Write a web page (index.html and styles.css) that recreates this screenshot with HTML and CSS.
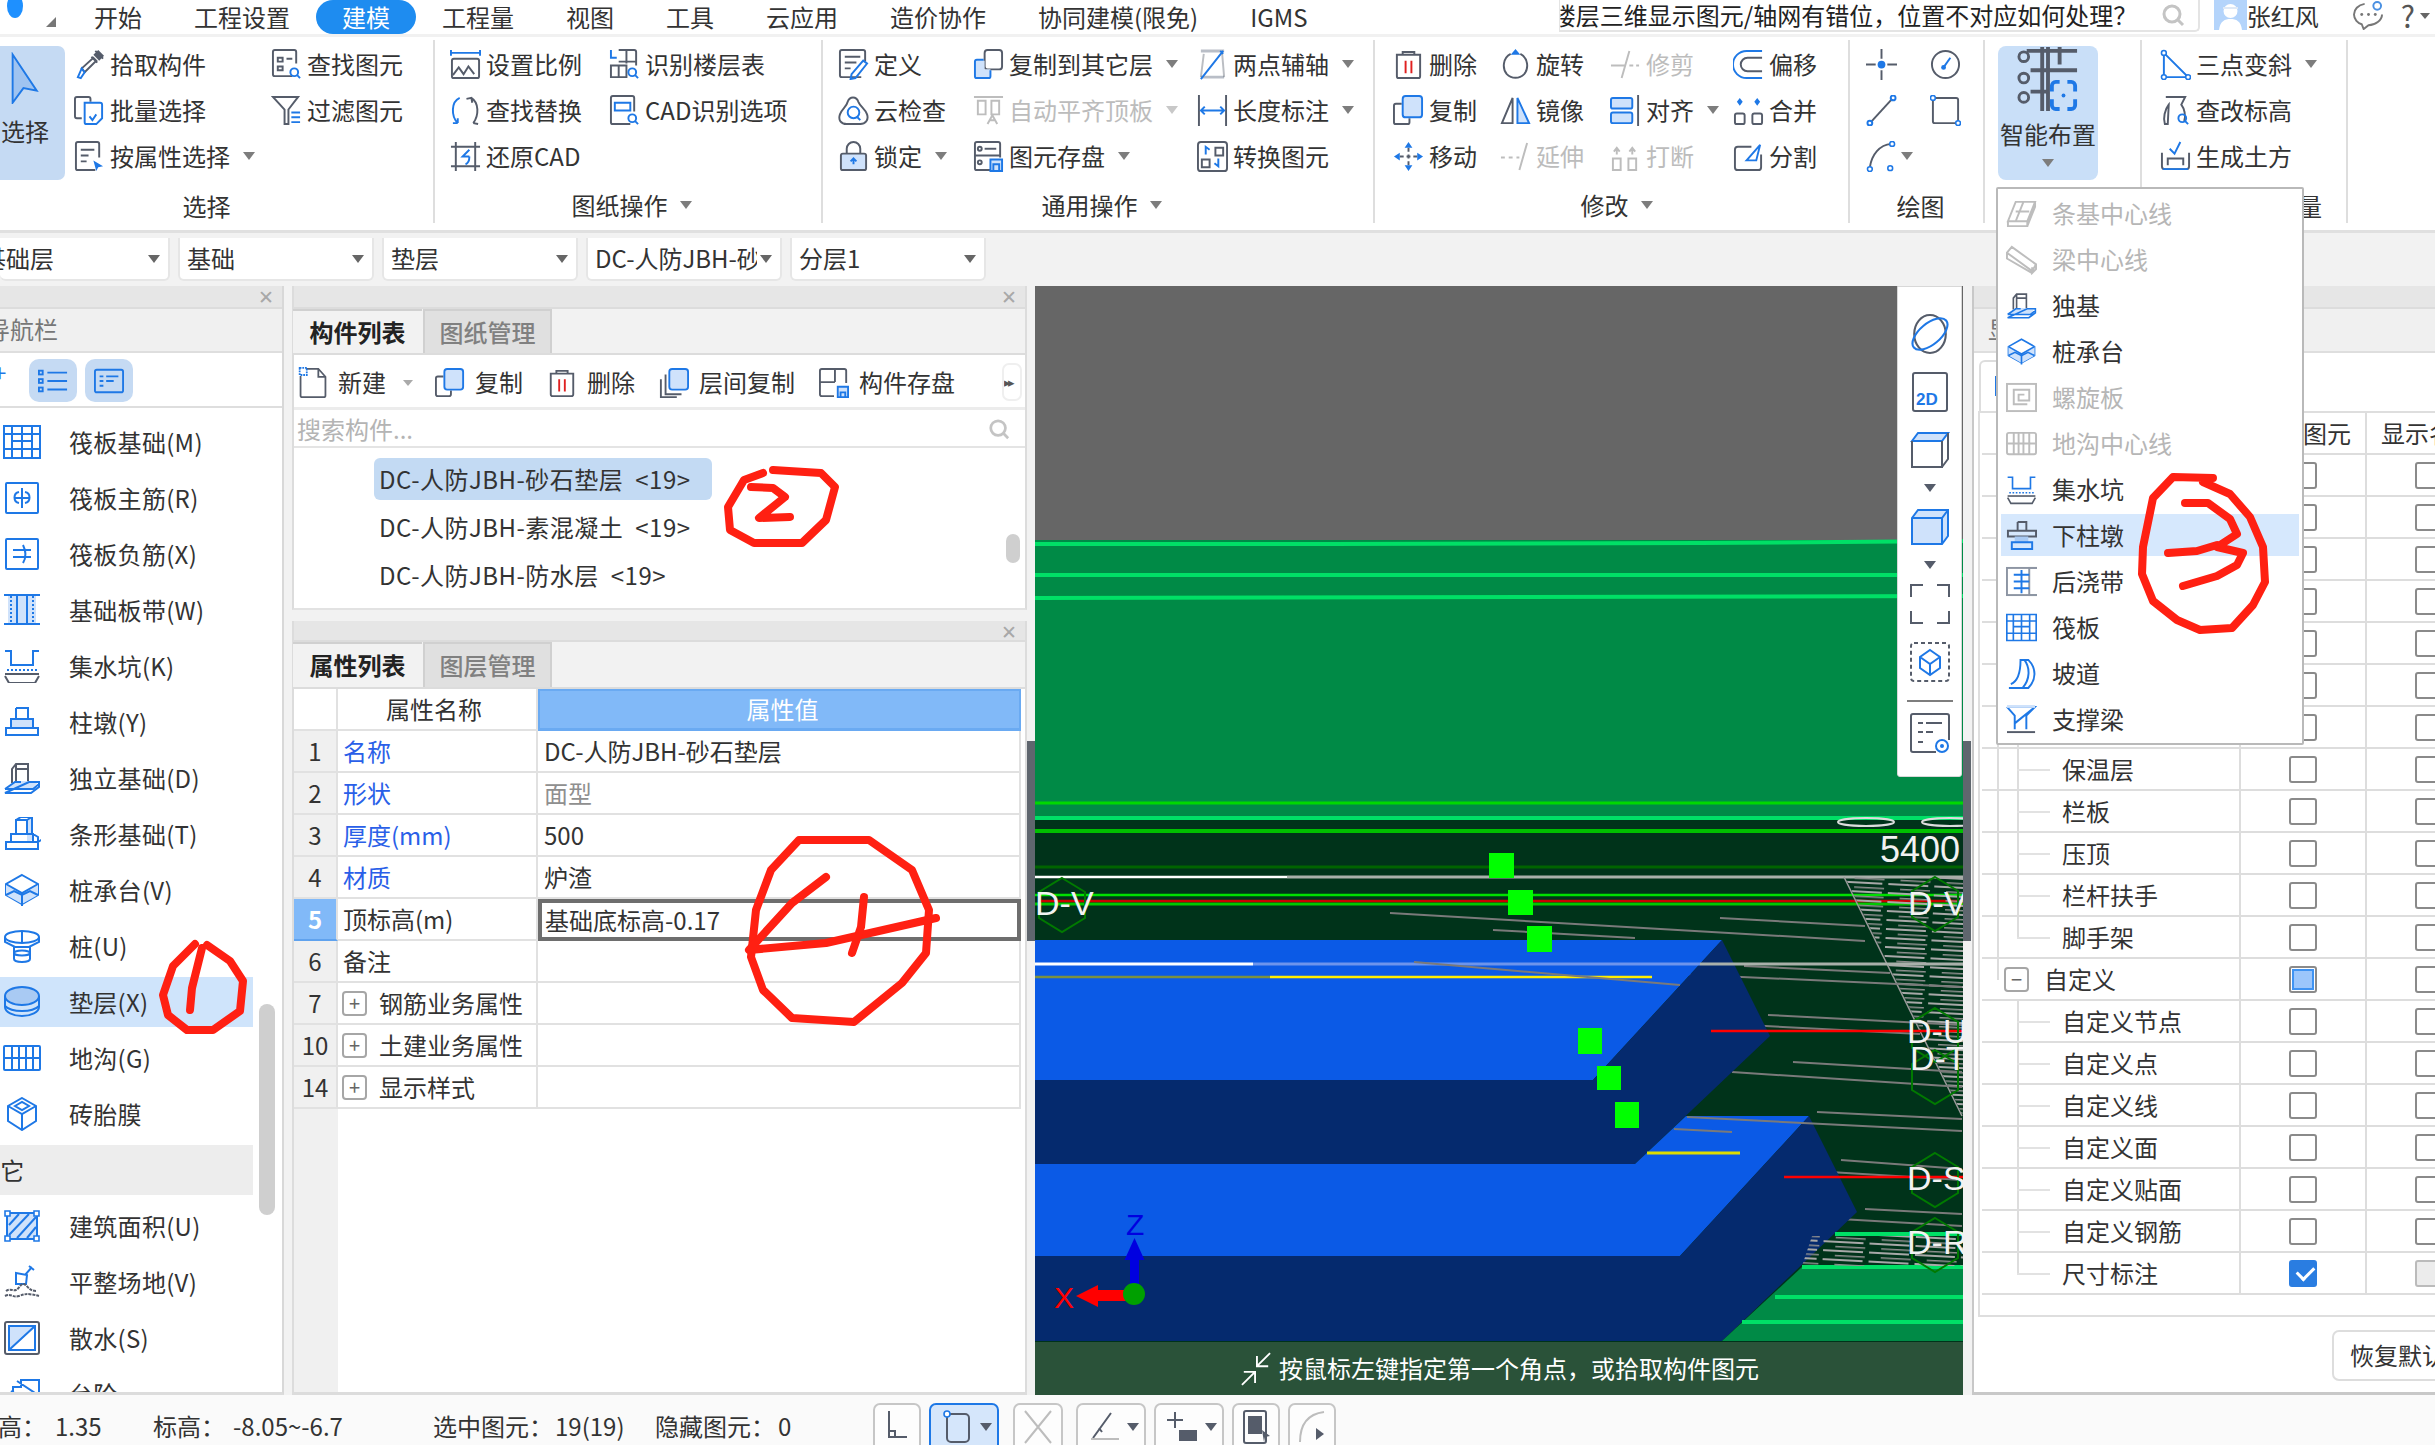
FILE: index.html
```html
<!DOCTYPE html>
<html lang="zh-CN">
<head>
<meta charset="utf-8">
<title>建模</title>
<link rel="stylesheet" href="styles.css">
</head>
<body>
<svg class="sprite" xmlns="http://www.w3.org/2000/svg">
<symbol id="pick" viewBox="0 0 32 32"><path class="d" d="M22 2l8 8M18 8l6 6M8 20L20 9l3 3L11 24z"/><path class="b" d="M8 20l-4 9 3 1 4-6z"/><path class="dk" d="M20 6l5-5 6 6-5 5z"/></symbol>
<symbol id="find" viewBox="0 0 32 32"><path class="d" d="M22 28H4a2 2 0 0 1-2-2V3a2 2 0 0 1 2-2h20a2 2 0 0 1 2 2v12"/><path class="d" d="M7 9h5v4H7zM16 10h6M7 18h5v4H7z"/><circle class="b" cx="24" cy="24" r="4"/><path class="b" d="M27 27l3 3"/></symbol>
<symbol id="batch" viewBox="0 0 32 32"><path class="d" d="M8 24H3a2 2 0 0 1-2-2V4a2 2 0 0 1 2-2h12a2 2 0 0 1 2 2v3"/><path class="b" d="M11 8h16a2 2 0 0 1 2 2v14l-6 6H13a2 2 0 0 1-2-2z"/><path class="b" d="M16 22l3 4 4-6"/></symbol>
<symbol id="filter" viewBox="0 0 32 32"><path class="d" d="M2 2h26L18 15v15h-4V15z"/><path class="b" d="M21 18h9M21 23h9M21 28h9"/></symbol>
<symbol id="attr" viewBox="0 0 32 32"><path class="d" d="M22 30H4a2 2 0 0 1-2-2V3a2 2 0 0 1 2-2h20a2 2 0 0 1 2 2v14"/><path class="d" d="M7 9h14M7 15h8M7 21h6"/><path class="bf" d="M20 20l10 6-5 1-2 4z"/></symbol>
<symbol id="scale" viewBox="0 0 32 32"><path class="b" d="M1 1v6M31 1v6M1 4h30"/><path class="d" d="M4 10h24a2 2 0 0 1 2 2v16a2 2 0 0 1-2 2H4a2 2 0 0 1-2-2V12a2 2 0 0 1 2-2z"/><path class="d" d="M3 27l6-8 5 7 5-8 6 8"/></symbol>
<symbol id="floors" viewBox="0 0 32 32"><path class="d" d="M10 1h16a2 2 0 0 1 2 2v14M18 1v14M10 13h18M2 17h16v12H2zM10 17v12"/><path class="b" d="M2 1v8h6"/><circle class="b" cx="24" cy="24" r="4"/><path class="b" d="M27 27l3 3"/></symbol>
<symbol id="replace" viewBox="0 0 32 32"><path class="b" d="M10 3C1 7 1 22 8 29M8 29l-5 0M8 29v-5"/><path class="d" d="M22 3c8 5 8 18 2 26M17 4l5-1 1 5M24 29l5 1"/></symbol>
<symbol id="cadopt" viewBox="0 0 32 32"><path class="d" d="M22 30H4a2 2 0 0 1-2-2V3a2 2 0 0 1 2-2h20a2 2 0 0 1 2 2v14"/><path class="b" d="M6 8h16v8H6z" stroke-width="1"/><circle class="b" cx="24" cy="24" r="4"/><path class="b" d="M27 27l3 3"/></symbol>
<symbol id="restore" viewBox="0 0 32 32"><path class="d" d="M6 1v30M26 1v30M1 6h30M1 26h30"/><path class="b" d="M20 9l-7 7h7M20 16c0 5-1 7-4 8"/></symbol>
<symbol id="def" viewBox="0 0 32 32"><path class="d" d="M24 29H4a2 2 0 0 1-2-2V3a2 2 0 0 1 2-2h22a2 2 0 0 1 2 2v10"/><path class="d" d="M7 8h16M7 14h12M7 20h6"/><path class="b" d="M26 12l4 3-12 15-5 1 1-5z"/></symbol>
<symbol id="cloud" viewBox="0 0 32 32"><path class="d" d="M9 30C3 30 0 26 2 20 4 14 9 12 10 7c2-6 9-6 11 0 2 5 7 7 9 13 2 6-2 10-7 10z"/><circle class="b" cx="16" cy="18" r="6"/><path class="b" d="M20 23l3 3"/></symbol>
<symbol id="lock" viewBox="0 0 32 32"><path class="d" d="M9 13V8a7 7 0 0 1 14 0v5"/><rect class="lf" x="3" y="13" width="26" height="17" rx="2"/><rect class="d" x="3" y="13" width="26" height="17" rx="2"/><path class="b" d="M16 18v6M13 21l3-3 3 3"/></symbol>
<symbol id="copyto" viewBox="0 0 32 32"><rect class="d" x="12" y="1" width="18" height="20" rx="3"/><path class="lf" d="M2 12h10v9h6v9H2z"/><path class="b" d="M11 11H4a2 2 0 0 0-2 2v15a2 2 0 0 0 2 2h12a2 2 0 0 0 2-2v-6"/></symbol>
<symbol id="auto" viewBox="0 0 32 32"><path class="g" d="M1 2h30M5 6h8v14H5zM19 6h8v14h-8zM15 30l5-9 5 9M17 26h6"/></symbol>
<symbol id="save" viewBox="0 0 32 32"><path class="d" d="M22 30H4a2 2 0 0 1-2-2V3a2 2 0 0 1 2-2h22a2 2 0 0 1 2 2v14M2 15h26"/><circle class="d" cx="7" cy="8" r="2"/><circle class="d" cx="7" cy="22" r="2"/><path class="d" d="M12 8h12"/><rect class="lf" x="18" y="19" width="12" height="12"/><path class="b" d="M18 19h12v12H18zM21 31v-7h6v7"/></symbol>
<symbol id="twopt" viewBox="0 0 32 32"><path class="dk2" d="M4 2h24M4 29h24"/><path class="b" d="M4 31L27 2M24 2l3 3"/><path class="d" d="M7 5l-3 24M26 5l2 24" opacity=".4"/></symbol>
<symbol id="len" viewBox="0 0 32 32"><path class="d" d="M2 0v32M30 0v32"/><path class="b" d="M4 16h24M8 12l-4 4 4 4M24 12l4 4-4 4"/></symbol>
<symbol id="conv" viewBox="0 0 32 32"><rect class="d" x="1" y="1" width="30" height="30" rx="3"/><path class="d" d="M19 7h8v8h-8zM5 19h8v8H5z"/><path class="b" d="M9 14V6l4 3M22 18v8l-4-3"/></symbol>
<symbol id="del" viewBox="0 0 32 32"><path class="d" d="M10 6V3h12v3M4 6h24v22a2 2 0 0 1-2 2H6a2 2 0 0 1-2-2z"/><path class="r" d="M13 12v13M19 12v13"/></symbol>
<symbol id="copy" viewBox="0 0 32 32"><path class="d" d="M9 9H3a2 2 0 0 0-2 2v17a2 2 0 0 0 2 2h12a2 2 0 0 0 2-2v-4"/><rect class="lf" x="10" y="1" width="20" height="22" rx="3"/><rect class="b" x="10" y="1" width="20" height="22" rx="3"/></symbol>
<symbol id="move" viewBox="0 0 32 32"><path class="d" d="M16 7v18M7 16h18" stroke-dasharray="4 3"/><path class="bf" d="M16 1l4 6h-8zM16 31l4-6h-8zM1 16l6-4v8zM31 16l-6-4v8z"/></symbol>
<symbol id="rot" viewBox="0 0 32 32"><path class="d" d="M11 5C3 9 2 20 7 26c5 5 13 5 18 0 5-6 4-17-4-21"/><path class="bf" d="M16 0l5 6h-10z"/></symbol>
<symbol id="mirror" viewBox="0 0 32 32"><path class="d" d="M13 3L2 29h11z"/><path class="lf" d="M18 3l12 26H18z"/><path class="b" d="M18 29V3l12 26z"/></symbol>
<symbol id="ext" viewBox="0 0 32 32"><path class="g" d="M1 17h4M9 17h4M17 17h3M28 2L20 30"/></symbol>
<symbol id="trim" viewBox="0 0 32 32"><path class="g" d="M20 2l-8 28M1 17h14M20 17h4M27 17h3"/></symbol>
<symbol id="brk" viewBox="0 0 32 32"><path class="g" d="M3 18h8v12H3zM19 18h8v12h-8zM7 14V8M23 14V8M4 11l3-4 3 4M20 11l3-4 3 4"/></symbol>
<symbol id="align" viewBox="0 0 32 32"><rect class="lf" x="1" y="3" width="22" height="11"/><rect class="b" x="1" y="3" width="22" height="11" rx="2"/><rect class="lf" x="1" y="18" width="22" height="11"/><rect class="b" x="1" y="18" width="22" height="11" rx="2"/><path class="d" d="M29 0v32"/></symbol>
<symbol id="offset" viewBox="0 0 32 32"><path class="b" d="M30 2H14A12 12 0 0 0 14 30h16"/><path class="d" d="M30 9H15a7 7 0 0 0 0 14h15"/></symbol>
<symbol id="merge" viewBox="0 0 32 32"><rect class="d" x="2" y="19" width="10" height="11" rx="2"/><rect class="d" x="20" y="19" width="10" height="11" rx="2"/><path class="bf" d="M7 3l3 4-3 4-3-4zM25 3l3 4-3 4-3-4z"/></symbol>
<symbol id="split" viewBox="0 0 32 32"><path class="d" d="M19 6H5a3 3 0 0 0-3 3v18a3 3 0 0 0 3 3h21a3 3 0 0 0 3-3V14"/><path class="b" d="M14 20l14-16-4 16z" stroke-width="1.6"/></symbol>
<symbol id="pt" viewBox="0 0 32 32"><path class="d" d="M16 0v10M16 22v10M0 16h10M22 16h10"/><circle class="bf" cx="16" cy="16" r="4"/></symbol>
<symbol id="gauge" viewBox="0 0 32 32"><circle class="d" cx="16" cy="16" r="14"/><path class="b" d="M14 19l7-10"/><circle class="bf" cx="14" cy="19" r="2.5"/></symbol>
<symbol id="lin" viewBox="0 0 32 32"><path class="d" d="M5 28L27 4"/><circle class="b" cx="4" cy="29" r="2.5"/><circle class="b" cx="28" cy="3" r="2.5"/></symbol>
<symbol id="rc" viewBox="0 0 32 32"><rect class="d" x="3" y="3" width="26" height="26" rx="2"/><circle class="bw" cx="3" cy="3" r="2.5"/><circle class="bw" cx="29" cy="29" r="2.5"/></symbol>
<symbol id="arc" viewBox="0 0 32 32"><path class="d" d="M4 27C6 14 14 4 26 3"/><circle class="bw" cx="4" cy="29" r="2.5"/><circle class="bw" cx="27" cy="3" r="2.5"/><circle class="bw" cx="25" cy="28" r="2.5"/></symbol>
<symbol id="smart" viewBox="0 0 64 66"><path class="dt" d="M10 4h52M32 0v66M14 24h48M14 46h20M44 0v18M26 0v66"/><circle class="dc" cx="7" cy="10" r="5"/><circle class="dc" cx="7" cy="32" r="5"/><circle class="dc" cx="7" cy="52" r="5"/><path class="bt" d="M36 46v-6a4 4 0 0 1 4-4h4M52 36h4a4 4 0 0 1 4 4v6M60 54v6a4 4 0 0 1-4 4h-4M44 64h-4a4 4 0 0 1-4-4v-6"/><circle class="bf" cx="48" cy="50" r="2"/></symbol>
<symbol id="tri" viewBox="0 0 32 32"><path class="b" d="M4 4v25h25L4 4"/><circle class="bw" cx="4" cy="4" r="2.5"/><circle class="bw" cx="4" cy="29" r="2.5"/><circle class="bw" cx="29" cy="29" r="2.5"/></symbol>
<symbol id="chk" viewBox="0 0 32 32"><path class="d" d="M6 2h20l-4 8c3 4 5 11 3 17M8 30H5c-2-6 0-15 4-20z"/><circle class="b" cx="23" cy="24" r="4"/><path class="b" d="M26 27l3 3"/></symbol>
<symbol id="earth" viewBox="0 0 32 32"><path class="d" d="M2 12v14a3 3 0 0 0 3 3h22a3 3 0 0 0 3-3V12M8 25v-7h16v7"/><path class="b" d="M10 8l5 5 6-12M3 29h26"/></symbol>
<symbol id="n-grid" viewBox="0 0 38 34"><path class="b" d="M1 1h36v32H1zM1 9h36M1 24h36M9 1v32M19 1v32M29 1v32M9 16h20"/></symbol>
<symbol id="n-zhu" viewBox="0 0 38 34"><rect class="b" x="3" y="2" width="32" height="30" rx="1"/><path class="b" d="M19 7v20M16 11c-6 1-6 10 0 11M22 11c6 1 6 10 0 11M11 17h16" stroke-width="1.6"/></symbol>
<symbol id="n-fu" viewBox="0 0 38 34"><rect class="b" x="3" y="2" width="32" height="30" rx="1"/><path class="b" d="M10 13h18M10 20h18M20 8c3 6 3 13 0 18" stroke-width="1.6"/></symbol>
<symbol id="n-band" viewBox="0 0 38 34"><rect class="lf" x="5" y="3" width="28" height="27"/><path class="b" d="M1 2h36M1 31h36M14 2v29M24 2v29"/><path class="b" d="M8 3v27M30 3v27" stroke-dasharray="2 2"/></symbol>
<symbol id="n-pit" viewBox="0 0 38 34"><path class="b" d="M2 2h6v14h22V2h6"/><path class="d" d="M2 27l4 7h26l4-7"/><path class="b" d="M4 21h30" stroke-dasharray="2 2"/><path class="d" d="M2 25h34" stroke-width="1"/></symbol>
<symbol id="n-pier" viewBox="0 0 38 34"><path class="lf" d="M8 14h22v9H8z"/><path class="b" d="M13 3h12v11M13 14V3M8 14h22v9H8zM3 23h32v7H3z"/></symbol>
<symbol id="n-iso" viewBox="0 0 38 34"><path class="d" d="M9 22V8l4-5h12v18M13 3v19M13 8h12"/><path class="lf" d="M2 28l10-8h24l-8 9z"/><path class="b" d="M2 28l10-7h6M26 21h10v5l-8 6H2zM2 28h28l6-5"/></symbol>
<symbol id="n-strip" viewBox="0 0 38 34"><path class="lf" d="M24 4l5-3v22l-5 2z"/><path class="b" d="M13 3h11v14H13zM13 3l5-3h11v18M24 3l5-3"/><path class="b" d="M8 17h22v8H8zM3 25h32v7H3zM30 17l5 3v5M35 25l5-3"/></symbol>
<symbol id="n-cap" viewBox="0 0 38 34"><path class="b" d="M19 2l16 9v11l-16 9-16-9V11z"/><path class="lf" d="M3 11l16 9 16-9v11l-16 9-16-9z"/><path class="b" d="M3 11l16 9 16-9M19 20v13"/><path class="b" d="M3 22l8-4 8 4 8-4 8 4" stroke-width="1"/></symbol>
<symbol id="n-pile" viewBox="0 0 38 34"><ellipse class="b" cx="19" cy="8" rx="17" ry="6"/><path class="b" d="M2 8v5l10 5h14l10-5V8M19 2v12M11 18v12a8 3 0 0 0 16 0V18"/><ellipse class="b" cx="19" cy="24" rx="8" ry="2.5"/></symbol>
<symbol id="n-pad" viewBox="0 0 38 34"><ellipse class="lm" cx="19" cy="11" rx="17" ry="9"/><ellipse class="b" cx="19" cy="11" rx="17" ry="9"/><path class="b" d="M2 11v11c0 5 8 9 17 9s17-4 17-9V11M2 21c4 4 10 5 17 5s13-1 17-5"/></symbol>
<symbol id="n-trench" viewBox="0 0 38 34"><rect class="b" x="1" y="5" width="36" height="24" rx="1"/><path class="b" d="M1 17h36M9 5v24M16 5v24M23 5v24M30 5v24"/></symbol>
<symbol id="n-brick" viewBox="0 0 38 34"><path class="b" d="M19 1l14 8v15l-14 9-14-9V9z"/><path class="b" d="M5 9l14 8 14-8M19 17v16M12 9l7-4 7 4-7 4z"/></symbol>
<symbol id="n-area" viewBox="0 0 38 34"><rect class="lf" x="4" y="4" width="30" height="26"/><path class="b" d="M4 4h30v26H4zM6 16L16 5M6 26L26 5M14 29L33 8M24 29l9-11" stroke-width="1.6"/><path class="bw" d="M2 2h5v5H2zM31 2h5v5h-5zM2 27h5v5H2zM31 27h5v5h-5z"/></symbol>
<symbol id="n-level" viewBox="0 0 38 34"><path class="b" d="M29 2l-7 8M26 1l5 4M13 8l11 2-1 9-10 0z"/><path class="d" d="M2 31c6-3 8 2 14 0s8-3 20 0M3 26c4-3 7 0 10-1s5-7 8-6 5 7 12 7" stroke-dasharray="3 1"/></symbol>
<symbol id="n-apron" viewBox="0 0 38 34"><rect class="d" x="2" y="1" width="34" height="32" rx="2"/><path class="lf" d="M6 5h27L6 30z"/><path class="b" d="M6 5h26v24H6zM6 29L32 5"/></symbol>
<symbol id="n-step" viewBox="0 0 38 34"><path class="b" d="M2 34V18h8V10h8V3h18v31zM14 4l18 12M8 14l24 14"/></symbol>
<symbol id="m-strip" viewBox="0 0 32 32"><path class="g" d="M10 4h20l-8 20H2zM2 24v5h20v-5l8-20v5l-8 20M18 4l-8 20M10 14h14"/></symbol>
<symbol id="m-beam" viewBox="0 0 32 32"><path class="g" d="M1 9l5-6 25 18-4 7zM1 9v6l26 15M27 24v6l4-4v-5"/></symbol>
<symbol id="m-spiral" viewBox="0 0 32 32"><rect class="g" x="1" y="2" width="30" height="28"/><path class="g" d="M22 23H8V8h16v11H13v-6h6"/></symbol>
<symbol id="m-trench" viewBox="0 0 32 32"><rect class="g" x="1" y="5" width="30" height="22" rx="2"/><path class="g" d="M1 16h30M8 5v22M13 5v22M18 5v22M24 5v22"/></symbol>
<symbol id="m-lower" viewBox="0 0 32 32"><path class="d" d="M12 2h9v9M12 11V2M2 17h29v-6H2zM11 17"/><path class="lm" d="M9 17h14v6H9z"/><path class="b" d="M6 23h21v7H6z"/></symbol>
<symbol id="m-post" viewBox="0 0 32 32"><rect class="g2" x="1" y="2" width="7" height="28"/><rect class="g2" x="24" y="2" width="7" height="28"/><path class="b" d="M8 9h16M8 16h16M8 23h16M16 4v24"/></symbol>
<symbol id="m-ramp" viewBox="0 0 32 32"><path class="b" d="M3 31h20c8-8 9-20 0-29h-4c6 8 6 20-2 29M5 27c7-3 10-13 10-25h8"/></symbol>
<symbol id="m-strut" viewBox="0 0 32 32"><path class="b" d="M1 3h29L21 12v14M1 3l8 9v14M30 3L9 20"/><path class="lf" d="M1 1h29v3H1z"/><path class="d" d="M1 29h29"/></symbol>
<symbol id="t-new" viewBox="0 0 32 36"><path class="d" d="M8 2h14l8 9v21a2 2 0 0 1-2 2H4a2 2 0 0 1-2-2V10M22 2v9h8"/><path class="b" d="M1 1h8v8H1z" stroke-dasharray="2 1" stroke-width="2"/></symbol>
<symbol id="t-fcopy" viewBox="0 0 32 32"><path class="d" d="M7 7v21h17M2 12v19h17"/><rect class="lf" x="11" y="1" width="20" height="22"/><rect class="b" x="11" y="1" width="20" height="22" rx="3"/></symbol>
<symbol id="t-save" viewBox="0 0 32 32"><path class="d" d="M16 30H3a2 2 0 0 1-2-2V3a2 2 0 0 1 2-2h24a2 2 0 0 1 2 2v13M1 15h16M17 1v14"/><rect class="lf" x="20" y="20" width="11" height="11"/><path class="b" d="M20 20h11v11H20zM23 31v-5h5v5"/></symbol>
<symbol id="v-orbit" viewBox="0 0 36 38"><ellipse class="d" cx="18" cy="19" rx="15" ry="18"/><ellipse class="b" cx="18" cy="19" rx="20" ry="10" transform="rotate(-40 18 19)"/></symbol>
<symbol id="v-box" viewBox="0 0 40 40"><path class="lf" d="M2 11l6-8h30l-6 8z"/><path class="b" d="M2 11l6-8h30l-6 8zM32 11h-30"/><path class="d" d="M2 11v26h30V11M38 3v26l-6 8"/></symbol>
<symbol id="v-solid" viewBox="0 0 40 40"><path class="lf" d="M2 11l6-8h30v26l-6 8H2z"/><path class="b" d="M2 11l6-8h30v26l-6 8H2zM2 11h30l6-8M32 11v26"/></symbol>
<symbol id="v-full" viewBox="0 0 40 40"><path class="d" d="M1 13V1h12M27 1h12v12M1 27v12h12M39 27v12H27"/></symbol>
<symbol id="v-dash" viewBox="0 0 40 40"><rect class="d" x="1" y="1" width="38" height="38" rx="3" stroke-dasharray="4 3"/><path class="b" d="M20 8l10 7v11l-10 7-10-7V15zM10 15l10 7 10-7M20 22v11"/></symbol>
<symbol id="v-eye" viewBox="0 0 40 40"><path class="d" d="M26 39H3a2 2 0 0 1-2-2V3a2 2 0 0 1 2-2h34a2 2 0 0 1 2 2v24M8 10h5M16 10h16M8 19h5M16 19h7M8 29h5"/><circle class="b" cx="32" cy="33" r="6"/><circle class="bf" cx="32" cy="33" r="2"/></symbol>
<symbol id="s-corner" viewBox="0 0 40 34"><path class="d" d="M12 1v26h18M18 27v-6h-6"/></symbol>
<symbol id="s-rect" viewBox="0 0 40 34"><rect class="d" x="9" y="4" width="22" height="28" rx="4"/><circle class="bw" cx="9" cy="4" r="3"/></symbol>
<symbol id="s-x" viewBox="0 0 40 34"><path class="g" d="M7 1l26 32M33 1L7 33"/></symbol>
<symbol id="s-ang" viewBox="0 0 40 34"><path class="d" d="M8 28L26 3M14 18l3 4"/><path class="g" d="M6 29h28" stroke-width="4"/></symbol>
<symbol id="s-plus" viewBox="0 0 40 34"><path class="d" d="M12 2v16M4 10h16"/><path class="df" d="M16 20h18v11H16z"/></symbol>
<symbol id="s-dev" viewBox="0 0 40 34"><rect class="d" x="8" y="1" width="22" height="32" rx="2"/><path class="df" d="M12 6h14v18H12z"/><path class="df" d="M26 20l8 6-5 1-1 5z"/></symbol>
<symbol id="s-cur" viewBox="0 0 40 34"><path class="g" d="M8 32C8 14 16 4 32 2"/><path class="df" d="M24 18l8 6-8 6z"/></symbol>
</svg>

<header class="menubar">
  <span class="logo"></span><span class="corner"></span>
  <nav class="tabs">
    <span class="tab">开始</span><span class="tab">工程设置</span><span class="tab active">建模</span><span class="tab">工程量</span><span class="tab">视图</span><span class="tab">工具</span><span class="tab">云应用</span><span class="tab">造价协作</span><span class="tab">协同建模(限免)</span><span class="tab">IGMS</span>
  </nav>
  <div class="searchbox"><span class="searchtext">楼层三维显示图元/轴网有错位，位置不对应如何处理？</span>
    <svg class="mag" viewBox="0 0 24 24"><circle cx="11" cy="11" r="8"/><path d="M17 17l5 5"/></svg>
  </div>
  <svg class="avatar" viewBox="0 0 33 30"><rect width="33" height="30" fill="#b4d4fb"/><circle cx="16.500" cy="11" r="7" fill="#fff"/><path d="M5 30c1-9 6-11 11.500-11S27 21 28 30z" fill="#fff"/><path d="M9 7h15v2H9z" fill="#dfe9f6"/></svg>
  <span class="username">张红风</span>
  <svg class="chat" viewBox="0 0 32 30"><path d="M12 3C5 4 1 9 1 14c0 5 4 9 8 10l2 5 5-4c7 0 14-5 14-11" fill="none" stroke="#777" stroke-width="2"/><circle cx="9" cy="14" r="1.500" fill="#777"/><circle cx="16" cy="14" r="1.500" fill="#777"/><circle cx="23" cy="14" r="1.500" fill="#777"/><circle cx="25" cy="5" r="4" fill="none" stroke="#4a90e2" stroke-width="2"/></svg>
  <span class="help">?</span><i class="caret small"></i>
</header>

<section class="ribbon">
  <div class="group g1">
    <div class="rows">
      <button class="bigbtn sel"><svg class="arrow" viewBox="0 0 45 82"><path d="M3 4l38 57-21-4L3 80z" fill="#9fc3f0" stroke="#1e78e6" stroke-width="3"/></svg><span class="bigsel">选择</span></button>
      <div class="ri"><svg class="ic"><use href="#pick"/></svg><span>拾取构件</span></div>
      <div class="ri"><svg class="ic"><use href="#find"/></svg><span>查找图元</span></div>
      <div class="ri"><svg class="ic"><use href="#batch"/></svg><span>批量选择</span></div>
      <div class="ri"><svg class="ic"><use href="#filter"/></svg><span>过滤图元</span></div>
      <div class="ri"><svg class="ic"><use href="#attr"/></svg><span>按属性选择</span><i class="caret"></i></div>
    </div>
    <div class="glabel gl1">选择</div>
  </div>
  <div class="group g2">
    <div class="rows">
      <div class="ri"><svg class="ic"><use href="#scale"/></svg><span>设置比例</span></div>
      <div class="ri"><svg class="ic"><use href="#floors"/></svg><span>识别楼层表</span></div>
      <div class="ri"><svg class="ic"><use href="#replace"/></svg><span>查找替换</span></div>
      <div class="ri"><svg class="ic"><use href="#cadopt"/></svg><span>CAD识别选项</span></div>
      <div class="ri"><svg class="ic"><use href="#restore"/></svg><span>还原CAD</span></div>
    </div>
    <div class="glabel up">图纸操作<i class="caret"></i></div>
  </div>
  <div class="group g3">
    <div class="rows">
      <div class="ri"><svg class="ic"><use href="#def"/></svg><span>定义</span></div>
      <div class="ri"><svg class="ic"><use href="#copyto"/></svg><span>复制到其它层</span><i class="caret"></i></div>
      <div class="ri"><svg class="ic"><use href="#twopt"/></svg><span>两点辅轴</span><i class="caret"></i></div>
      <div class="ri"><svg class="ic"><use href="#cloud"/></svg><span>云检查</span></div>
      <div class="ri off"><svg class="ic"><use href="#auto"/></svg><span>自动平齐顶板</span><i class="caret"></i></div>
      <div class="ri"><svg class="ic"><use href="#len"/></svg><span>长度标注</span><i class="caret"></i></div>
      <div class="ri"><svg class="ic"><use href="#lock"/></svg><span>锁定</span><i class="caret"></i></div>
      <div class="ri"><svg class="ic"><use href="#save"/></svg><span>图元存盘</span><i class="caret"></i></div>
      <div class="ri"><svg class="ic"><use href="#conv"/></svg><span>转换图元</span></div>
    </div>
    <div class="glabel up">通用操作<i class="caret"></i></div>
  </div>
  <div class="group g4">
    <div class="rows">
      <div class="ri"><svg class="ic"><use href="#del"/></svg><span>删除</span></div>
      <div class="ri"><svg class="ic"><use href="#rot"/></svg><span>旋转</span></div>
      <div class="ri off"><svg class="ic"><use href="#trim"/></svg><span>修剪</span></div>
      <div class="ri"><svg class="ic"><use href="#offset"/></svg><span>偏移</span></div>
      <div class="ri"><svg class="ic"><use href="#copy"/></svg><span>复制</span></div>
      <div class="ri"><svg class="ic"><use href="#mirror"/></svg><span>镜像</span></div>
      <div class="ri"><svg class="ic"><use href="#align"/></svg><span>对齐</span><i class="caret"></i></div>
      <div class="ri"><svg class="ic"><use href="#merge"/></svg><span>合并</span></div>
      <div class="ri"><svg class="ic"><use href="#move"/></svg><span>移动</span></div>
      <div class="ri off"><svg class="ic"><use href="#ext"/></svg><span>延伸</span></div>
      <div class="ri off"><svg class="ic"><use href="#brk"/></svg><span>打断</span></div>
      <div class="ri"><svg class="ic"><use href="#split"/></svg><span>分割</span></div>
    </div>
    <div class="glabel up">修改<i class="caret"></i></div>
  </div>
  <div class="group g5">
    <div class="rows">
      <div class="ri"><svg class="ic"><use href="#pt"/></svg></div>
      <div class="ri"><svg class="ic"><use href="#gauge"/></svg></div>
      <div class="ri"><svg class="ic"><use href="#lin"/></svg></div>
      <div class="ri"><svg class="ic"><use href="#rc"/></svg></div>
      <div class="ri"><svg class="ic"><use href="#arc"/></svg><i class="caret tight"></i></div>
    </div>
    <div class="glabel">绘图</div>
  </div>
  <div class="group g6">
    <button class="bigbtn smartbtn"><svg class="smart"><use href="#smart"/></svg><span>智能布置</span><i class="caret"></i></button>
  </div>
  <div class="group g7">
    <div class="rows">
      <div class="ri"><svg class="ic"><use href="#tri"/></svg><span>三点变斜</span><i class="caret"></i></div>
      <div class="ri"><svg class="ic"><use href="#chk"/></svg><span>查改标高</span></div>
      <div class="ri"><svg class="ic"><use href="#earth"/></svg><span>生成土方</span></div>
    </div>
    <div class="glabel right">量</div>
  </div>
</section>

<section class="combobar">
  <div class="combo first"><span class="cut">基础层</span><i class="caret"></i></div>
  <div class="combo"><span>基础</span><i class="caret"></i></div>
  <div class="combo"><span>垫层</span><i class="caret"></i></div>
  <div class="combo"><span class="clip">DC-人防JBH-砂石垫层</span><i class="caret"></i></div>
  <div class="combo"><span>分层1</span><i class="caret"></i></div>
</section>

<main class="body">
  <aside class="leftpanel">
    <div class="titlebar"><span class="x">✕</span></div>
    <div class="navtitle"><span>导航栏</span></div>
    <div class="navtools">
      <span class="plus">+</span>
      <span class="navbtn"><svg viewBox="0 0 32 26"><rect class="b" x="1" y="2" width="4" height="4"/><rect class="b" x="1" y="11" width="4" height="4"/><rect class="b" x="1" y="20" width="4" height="4"/><path class="b" d="M10 4h21M10 13h21M10 22h21"/></svg></span>
      <span class="navbtn"><svg viewBox="0 0 32 26"><rect class="b" x="1" y="1" width="30" height="24" rx="2"/><path class="b" d="M6 8h4M13 8h13M6 13h4M13 13h8M6 18h4"/></svg></span>
    </div>
    <ul class="navlist">
      <li><svg><use href="#n-grid"/></svg>筏板基础(M)</li>
      <li><svg><use href="#n-zhu"/></svg>筏板主筋(R)</li>
      <li><svg><use href="#n-fu"/></svg>筏板负筋(X)</li>
      <li><svg><use href="#n-band"/></svg>基础板带(W)</li>
      <li><svg><use href="#n-pit"/></svg>集水坑(K)</li>
      <li><svg><use href="#n-pier"/></svg>柱墩(Y)</li>
      <li><svg><use href="#n-iso"/></svg>独立基础(D)</li>
      <li><svg><use href="#n-strip"/></svg>条形基础(T)</li>
      <li><svg><use href="#n-cap"/></svg>桩承台(V)</li>
      <li><svg><use href="#n-pile"/></svg>桩(U)</li>
      <li class="on"><svg><use href="#n-pad"/></svg>垫层(X)</li>
      <li><svg><use href="#n-trench"/></svg>地沟(G)</li>
      <li><svg><use href="#n-brick"/></svg>砖胎膜</li>
      <li class="sec"><span>其它</span></li>
      <li><svg><use href="#n-area"/></svg>建筑面积(U)</li>
      <li><svg><use href="#n-level"/></svg>平整场地(V)</li>
      <li><svg><use href="#n-apron"/></svg>散水(S)</li>
      <li><svg><use href="#n-step"/></svg>台阶</li>
    </ul>
    <span class="thumb navthumb"></span>
  </aside>

  <div class="midcol">
    <section class="panel complist">
      <div class="titlebar"><span class="x">✕</span></div>
      <div class="ptabs"><span class="ptab active">构件列表</span><span class="ptab">图纸管理</span></div>
      <div class="ptools">
        <span class="pt w-new"><svg><use href="#t-new"/></svg>新建<i class="caret"></i></span>
        <span class="pt w-cp"><svg><use href="#copy"/></svg>复制</span>
        <span class="pt w-del"><svg><use href="#del"/></svg>删除</span>
        <span class="pt w-fl"><svg><use href="#t-fcopy"/></svg>层间复制</span>
        <span class="pt"><svg><use href="#t-save"/></svg>构件存盘</span>
        <span class="more">▸▸</span>
      </div>
      <div class="psearch"><span>搜索构件...</span><svg class="mag" viewBox="0 0 24 24"><circle cx="11" cy="11" r="8"/><path d="M17 17l5 5"/></svg></div>
      <ul class="clist">
        <li class="on">DC-人防JBH-砂石垫层 &lt;19&gt;</li>
        <li>DC-人防JBH-素混凝土 &lt;19&gt;</li>
        <li>DC-人防JBH-防水层 &lt;19&gt;</li>
      </ul>
      <span class="thumb listthumb"></span>
    </section>

    <section class="panel proplist">
      <div class="titlebar"><span class="x">✕</span></div>
      <div class="ptabs"><span class="ptab active">属性列表</span><span class="ptab">图层管理</span></div>
      <div class="ptable">
        <div class="prow head"><span class="n"></span><span class="k ctr">属性名称</span><span class="v vh">属性值</span></div>
        <div class="prow"><span class="n">1</span><span class="k link">名称</span><span class="v">DC-人防JBH-砂石垫层</span></div>
        <div class="prow"><span class="n">2</span><span class="k link">形状</span><span class="v gray">面型</span></div>
        <div class="prow"><span class="n">3</span><span class="k link">厚度(mm)</span><span class="v">500</span></div>
        <div class="prow"><span class="n">4</span><span class="k link">材质</span><span class="v">炉渣</span></div>
        <div class="prow"><span class="n cur">5</span><span class="k">顶标高(m)</span><span class="v edit">基础底标高-0.17</span></div>
        <div class="prow"><span class="n">6</span><span class="k">备注</span><span class="v"></span></div>
        <div class="prow"><span class="n">7</span><span class="k"><b class="pm">+</b>钢筋业务属性</span><span class="v"></span></div>
        <div class="prow"><span class="n">10</span><span class="k"><b class="pm">+</b>土建业务属性</span><span class="v"></span></div>
        <div class="prow"><span class="n">14</span><span class="k"><b class="pm">+</b>显示样式</span><span class="v"></span></div>
      </div>
    </section>
  </div>

  <section class="viewport">
    <svg class="scene" viewBox="1035 286 928 1056" preserveAspectRatio="none">
      <defs>
        <pattern id="hatch" width="46" height="9" patternUnits="userSpaceOnUse" patternTransform="rotate(3)"><rect width="40" height="2" fill="#a8a8a8"/><rect x="12" y="5" width="30" height="1.500" fill="#8f8f8f"/></pattern>
      </defs>
      <rect x="1035" y="286" width="928" height="254" fill="#666"/>
      <rect x="1035" y="540" width="928" height="280" fill="#008a46"/>
      <rect x="1035" y="820" width="928" height="522" fill="#00331a"/>
      <path d="M1035 544H1330L1700 543 1963 541" class="gl"/>
      <path d="M1035 575H1963" class="gl"/>
      <path d="M1035 598L1963 596" class="gl"/>
      <path d="M1035 803H1963" stroke="#00d800" stroke-width="3"/>
      <path d="M1035 818H1963" class="gl" stroke-width="5"/>
      <path d="M1035 831H1963" stroke="#00c000" stroke-width="4"/>
      <path d="M1035 867H1963" stroke="#006400" stroke-width="3"/>
      <ellipse cx="1866" cy="822" rx="28" ry="4" fill="none" stroke="#ddd" stroke-width="2"/>
      <ellipse cx="1950" cy="822" rx="28" ry="4" fill="none" stroke="#ddd" stroke-width="2"/>
      <text x="1880" y="862" class="lab big">5400</text>
      <path d="M1035 877H1287" stroke="#fff" stroke-width="2.500"/><path d="M1287 877H1963" stroke="#a9b0aa" stroke-width="3"/>
      <path d="M1035 895H1963" stroke="#00e000" stroke-width="2.500"/>
      <path d="M1035 904H1963" stroke="#00c800" stroke-width="3"/>
      <path d="M1040 901H1963" stroke="#c00" stroke-width="2.500"/>
      <path d="M1845 877L1963 1116V877z" fill="url(#hatch)"/>
      <path d="M1844 877L1962 1116" stroke="#9a9a9a" stroke-width="1.500"/>
      <path d="M1390 913L1865 941M1493 930L1635 938M1720 918L1865 926M1414 962L1962 987M1744 966L1890 973M1708 1023L1920 1034M1768 1015L1962 1025M1793 1062L1962 1072M1732 1072L1962 1087M1817 1112L1962 1119M1841 1160L1962 1169M1780 1169L1962 1180M1865 1209L1962 1214M1805 1217L1962 1226" class="gy"/>
      <path d="M1035 940H1722L1593 1080H1035z" fill="#0b5ae6"/>
      <path d="M1722 940L1770 1036 1635 1164H1035V1080H1593z" fill="#052a6e"/>
      <path d="M1035 1164H1635L1686 1116H1809L1680 1256H1035z" fill="#0b5ae6"/>
      <path d="M1809 1116L1857 1212 1722 1341H1035V1256H1680z" fill="#052a6e"/>
      <path d="M1722 1341L1802 1267H1963V1341z" fill="#008a46"/>
      <path d="M1775 1297H1963M1742 1322H1963" class="gl"/>
      <path d="M1802 1267H1963" class="gl"/>
      <path d="M1812 1236H1963V1266H1802z" fill="url(#hatch)"/>
      <path d="M1835 1234H1963" class="gl"/>
      <path d="M1035 964H1253" stroke="#fff" stroke-width="3"/><path d="M1253 964H1700" stroke="#6d94ec" stroke-width="3"/><path d="M1700 964H1963" stroke="#a9b0aa" stroke-width="3"/>
      <path d="M1035 977H1270" stroke="#7b9140" stroke-width="2.500"/><path d="M1270 977H1652" stroke="#ffee00" stroke-width="2.500"/>
      <path d="M1647 1153H1740" stroke="#dddd00" stroke-width="3"/>
      <path d="M1414 962L1680 985M1687 1117L1962 1131M1674 1129L1732 1132" class="gy"/>
      <path d="M1711 1031H1963M1784 1177H1963" stroke="#f00" stroke-width="2.500"/>
      <g class="hex"><path d="M1062 878l23 14v26l-23 14-23-14v-26z"/><path d="M1935 877l23 14v26l-23 14-23-14v-26z"/><path d="M1935 1008l23 14v26l-23 14-23-14v-26z"/><path d="M1935 1050l23 14v26l-23 14-23-14v-26z"/><path d="M1935 1153l23 14v26l-23 14-23-14v-26z"/><path d="M1935 1218l23 14v26l-23 14-23-14v-26z"/></g>
      <text x="1035" y="915" class="lab">D-V</text><text x="1908" y="915" class="lab">D-V</text>
      <text x="1907" y="1043" class="lab">D-U</text><text x="1910" y="1070" class="lab">D-T</text>
      <text x="1907" y="1190" class="lab">D-S</text><text x="1907" y="1254" class="lab">D-R</text>
      <g fill="#00ff00">
        <rect x="1489" y="853" width="25" height="25"/><rect x="1508" y="890" width="25" height="25"/><rect x="1527" y="926" width="25" height="26"/>
        <rect x="1578" y="1028" width="24" height="26"/><rect x="1597" y="1066" width="24" height="24"/><rect x="1615" y="1102" width="24" height="26"/>
      </g>
      <text x="1126" y="1235" class="axz">Z</text>
      <path d="M1130 1260h9v24h-9zM1134.500 1238l-10 22h20z" fill="#0000e0"/>
      <path d="M1098 1290h34v11h-34zM1076 1296l22-11v22z" fill="#f00"/>
      <ellipse cx="1134" cy="1294" rx="11" ry="11" fill="#00a000"/>
      <text x="1054" y="1308" class="axx">X</text>
    </svg>
    <div class="hint">
      <svg viewBox="0 0 32 36"><path d="M31 1L17 15M17 4v11h12M1 35L15 21M15 33V21H3" fill="none" stroke="#fff" stroke-width="2"/></svg>
      <span>按鼠标左键指定第一个角点，或拾取构件图元</span>
    </div>
    <div class="viewbar">
      <svg class="v1"><use href="#v-orbit"/></svg>
      <svg class="v1" viewBox="0 0 40 40"><rect class="d" x="3" y="1" width="34" height="38" rx="2"/><text x="6" y="33" class="two">2D</text></svg>
      <svg class="v1"><use href="#v-box"/></svg><i class="caret dark"></i>
      <svg class="v1"><use href="#v-solid"/></svg><i class="caret dark"></i>
      <svg class="v1"><use href="#v-full"/></svg>
      <svg class="v1"><use href="#v-dash"/></svg>
      <span class="vline"></span>
      <svg class="v1"><use href="#v-eye"/></svg>
    </div>
  </section>

  <aside class="rightpanel">
    <div class="titlebar"></div>
    <div class="navtitle"><span class="rt">显</span></div>
    <div class="rtabs"><span class="rtab"><b></b></span></div>
    <div class="rtable">
      <div class="rrow head"><span></span><span class="ctr hdr">图元</span><span class="ctr">显示名称</span></div>
      <div class="rrow t2"><span class="nm"></span><span class="c"><i class="cb"></i></span><span class="c"><i class="cb"></i></span></div>
      <div class="rrow t2"><span class="nm"></span><span class="c"><i class="cb"></i></span><span class="c"><i class="cb"></i></span></div>
      <div class="rrow t2"><span class="nm"></span><span class="c"><i class="cb"></i></span><span class="c"><i class="cb"></i></span></div>
      <div class="rrow t2"><span class="nm"></span><span class="c"><i class="cb"></i></span><span class="c"><i class="cb"></i></span></div>
      <div class="rrow t2"><span class="nm"></span><span class="c"><i class="cb"></i></span><span class="c"><i class="cb"></i></span></div>
      <div class="rrow t2"><span class="nm"></span><span class="c"><i class="cb"></i></span><span class="c"><i class="cb"></i></span></div>
      <div class="rrow t2"><span class="nm"></span><span class="c"><i class="cb"></i></span><span class="c"><i class="cb"></i></span></div>
      <div class="rrow t2"><span class="nm">保温层</span><span class="c"><i class="cb"></i></span><span class="c"><i class="cb"></i></span></div>
      <div class="rrow t2"><span class="nm">栏板</span><span class="c"><i class="cb"></i></span><span class="c"><i class="cb"></i></span></div>
      <div class="rrow t2"><span class="nm">压顶</span><span class="c"><i class="cb"></i></span><span class="c"><i class="cb"></i></span></div>
      <div class="rrow t2"><span class="nm">栏杆扶手</span><span class="c"><i class="cb"></i></span><span class="c"><i class="cb"></i></span></div>
      <div class="rrow t2 last"><span class="nm">脚手架</span><span class="c"><i class="cb"></i></span><span class="c"><i class="cb"></i></span></div>
      <div class="rrow group-row"><span class="nm"><b class="pm minus">−</b>自定义</span><span class="c"><i class="cb part"></i></span><span class="c"><i class="cb"></i></span></div>
      <div class="rrow t1"><span class="nm">自定义节点</span><span class="c"><i class="cb"></i></span><span class="c"><i class="cb"></i></span></div>
      <div class="rrow t1"><span class="nm">自定义点</span><span class="c"><i class="cb"></i></span><span class="c"><i class="cb"></i></span></div>
      <div class="rrow t1"><span class="nm">自定义线</span><span class="c"><i class="cb"></i></span><span class="c"><i class="cb"></i></span></div>
      <div class="rrow t1"><span class="nm">自定义面</span><span class="c"><i class="cb"></i></span><span class="c"><i class="cb"></i></span></div>
      <div class="rrow t1"><span class="nm">自定义贴面</span><span class="c"><i class="cb"></i></span><span class="c"><i class="cb"></i></span></div>
      <div class="rrow t1"><span class="nm">自定义钢筋</span><span class="c"><i class="cb"></i></span><span class="c"><i class="cb"></i></span></div>
      <div class="rrow t1 last"><span class="nm">尺寸标注</span><span class="c"><i class="cb on"></i></span><span class="c"><i class="cb dis"></i></span></div>
    </div>
    <div class="rfoot"><button class="rbtn">恢复默认设置</button></div>
  </aside>

  <span class="handle hleft"></span>
  <span class="handle hright"></span>
</main>

<footer class="statusbar">
  <div class="stats">
    <span class="s1">层高：</span><span class="s2">1.35</span><span class="s3">标高：</span><span class="s4">-8.05~-6.7</span><span class="s5">选中图元：</span><span class="s6">19(19)</span><span class="s7">隐藏图元：</span><span class="s8">0</span>
  </div>
  <div class="sbtns">
    <span class="sb w48"><svg><use href="#s-corner"/></svg></span>
    <span class="sb w70 on"><svg class="sv"><use href="#s-rect"/></svg><i class="caret dark"></i></span>
    <span class="sb w50 m14"><svg><use href="#s-x"/></svg></span>
    <span class="sb w70 m13"><svg class="sv"><use href="#s-ang"/></svg><i class="caret dark"></i></span>
    <span class="sb w70"><svg class="sv"><use href="#s-plus"/></svg><i class="caret dark"></i></span>
    <span class="sb w48"><svg><use href="#s-dev"/></svg></span>
    <span class="sb w48"><svg><use href="#s-cur"/></svg></span>
  </div>
</footer>

<div class="dropmenu">
  <div class="mi off"><svg><use href="#m-strip"/></svg>条基中心线</div>
  <div class="mi off"><svg><use href="#m-beam"/></svg>梁中心线</div>
  <div class="mi"><svg><use href="#n-iso"/></svg>独基</div>
  <div class="mi"><svg><use href="#n-cap"/></svg>桩承台</div>
  <div class="mi off"><svg><use href="#m-spiral"/></svg>螺旋板</div>
  <div class="mi off"><svg><use href="#m-trench"/></svg>地沟中心线</div>
  <div class="mi"><svg><use href="#n-pit"/></svg>集水坑</div>
  <div class="mi hover"><svg><use href="#m-lower"/></svg>下柱墩</div>
  <div class="mi"><svg><use href="#m-post"/></svg>后浇带</div>
  <div class="mi"><svg><use href="#n-grid"/></svg>筏板</div>
  <div class="mi"><svg><use href="#m-ramp"/></svg>坡道</div>
  <div class="mi"><svg><use href="#m-strut"/></svg>支撑梁</div>
</div>

<svg class="annot" viewBox="0 0 2435 1445">
  <path d="M195 944L173 966 163 995 168 1015 187 1030 213 1030 240 1011 243 981 230 961 207 945"/>
  <path d="M202 948L192 988 190 1010"/>
  <path d="M763 473L744 480 728 507 730 530 754 543 802 543 826 520 835 487 821 473 773 470"/>
  <path d="M751 487L773 488 785 497 759 518 790 517"/>
  <path d="M799 840L869 840 912 870 929 910 926 953 902 983 854 1022 792 1018 763 990 751 957 756 910 771 870z"/>
  <path d="M826 877L792 903 749 950 826 943 936 918"/>
  <path d="M864 897L861 927 852 953"/>
  <path d="M2213 478L2173 477 2153 498 2143 547 2142 574 2153 601 2177 620 2200 630 2232 628 2253 605 2265 582 2263 547 2250 517 2230 494 2203 482"/>
  <path d="M2185 503L2208 503 2230 519 2237 534 2217 547 2243 553 2237 565 2217 576 2183 586"/>
  <path d="M2168 553L2197 551 2217 545"/>
</svg>
</body>
</html>
```

FILE: styles.css
```css
* { box-sizing: border-box; }
html, body { margin: 0; padding: 0; width: 2435px; height: 1445px; overflow: hidden; }
body { background: #f2f2f2; color: #333; font: 24px/1.2 "Noto Sans CJK SC", "Noto Sans", sans-serif; position: relative; }
ul { list-style: none; margin: 0; padding: 0; }
button { font: inherit; color: inherit; border: 0; background: none; padding: 0; }
.sprite { display: none; }

/* icon paint */
.d { fill: none; stroke: #555c6a; stroke-width: 2; }
.b { fill: none; stroke: #1e78e6; stroke-width: 2; }
.g { fill: none; stroke: #bdbdbd; stroke-width: 2; }
.g2 { fill: none; stroke: #8d95a3; stroke-width: 2; }
.r { fill: none; stroke: #e02020; stroke-width: 2; }
.lf { fill: #cfe2fb; stroke: none; }
.lm { fill: #a9caf3; stroke: none; }
.bf { fill: #1e78e6; stroke: none; }
.bw { fill: #fff; stroke: #1e78e6; stroke-width: 1.6; }
.df { fill: #555c6a; stroke: none; }
.dk { fill: #555c6a; stroke: none; }
.dk2 { fill: none; stroke: #b9bec7; stroke-width: 3; }
.dt { fill: none; stroke: #555c6a; stroke-width: 4; }
.dc { fill: none; stroke: #555c6a; stroke-width: 3; }
.bt { fill: none; stroke: #1e78e6; stroke-width: 4; }

.caret { display: inline-block; width: 0; height: 0; border: 6px solid transparent; border-top: 8px solid #7d7d7d; border-bottom: 0; margin-left: 8px; flex: none; }
.caret.tight { margin-left: -1px; }
.caret.small { border-width: 5px; border-top-width: 6px; border-bottom: 0; margin-left: 5px; border-top-color: #666; }
.caret.dark { border-top-color: #555c6a; margin: 0; }

/* menu bar */
.menubar { height: 37px; background: #fff; border-bottom: 3px solid #f1f1f1; display: flex; align-items: flex-start; position: relative; overflow: hidden; }
.logo { position: absolute; left: 7px; top: -6px; width: 16px; height: 24px; border-radius: 50%; background: #1e90ff; }
.corner { position: absolute; left: 46px; top: 17px; border: 5px solid transparent; border-right-color: #777; border-bottom-color: #777; }
.tabs { display: flex; padding-left: 68px; height: 34px; align-items: center; }
.tab { padding: 0 26px; white-space: nowrap; height: 34px; line-height: 34px; }
.tab.active { background: #1e8cf0; color: #fff; border-radius: 17px; }
.searchbox { margin-left: auto; width: 641px; height: 32px; background: #fff; border: 2px solid #e4e4e4; border-top: 0; border-left-width: 1px; border-radius: 0 0 5px 0; display: flex; align-items: center; overflow: hidden; }
.searchtext { color: #222; white-space: nowrap; margin-left: -8px; line-height: 30px; flex: none; }
.mag { width: 24px; height: 24px; fill: none; stroke: #c4c4c4; stroke-width: 3; margin-left: 24px; flex: none; }
.avatar { width: 33px; height: 30px; margin-left: 14px; flex: none; }
.username { margin-right: 34px; line-height: 32px; flex: none; }
.chat { width: 31px; height: 29px; flex: none; margin-top: 1px; }
.help { margin-left: 17px; font-size: 30px; line-height: 30px; color: #555; flex: none; }
.help + .caret { margin-top: 13px; margin-right: 5px; }

/* ribbon */
.ribbon { height: 196px; background: #fff; border-bottom: 3px solid #e0e0e0; display: flex; }
.group { height: 183px; margin-top: 3px; border-right: 2px solid #dedede; flex: none; display: flex; flex-direction: column; }
.rows { display: grid; grid-template-rows: repeat(3, 46px); height: 138px; padding-top: 1px; }
.glabel { flex: 1; text-align: center; padding: 11px 8px 0 0; line-height: 34px; white-space: nowrap; display: flex; align-items: center; justify-content: center; height: 45px; }
.glabel .caret { margin-left: 12px; }
.glabel.up { padding-top: 8px; }
.glabel.gl1 { padding-right: 20px; }
.glabel.right { justify-content: flex-end; padding-right: 24px; }
.g1 { width: 435px; } .g1 .rows { grid-template-columns: 74px 197px auto; }
.g2 { width: 388px; padding-left: 15px; } .g2 .rows { grid-template-columns: 159px auto; }
.g3 { width: 552px; padding-left: 15px; } .g3 .rows { grid-template-columns: 135px 224px auto; }
.g4 { width: 475px; padding-left: 18px; } .g4 .rows { grid-template-columns: 107px 110px 123px auto; }
.g5 { width: 135px; padding-left: 16px; } .g5 .rows { grid-template-columns: 64px auto; }
.g6 { width: 157px; padding-left: 13px; }
.g7 { width: 206px; padding-left: 18px; }
.ri { display: flex; align-items: center; gap: 5px; white-space: nowrap; }
.ri.off { color: #bcbcbc; }
.ri.off .caret { border-top-color: #c8c8c8; }
.ic { width: 31px; height: 31px; flex: none; }
.bigbtn { grid-row: 1 / 4; background: #c5daf3; border-radius: 0 7px 7px 0; width: 65px; height: 134px; margin-top: 5px; position: relative; overflow: hidden; display: flex; flex-direction: column; }
.arrow { width: 42px; height: 52px; margin: 6px 0 0 4px; flex: none; }
.bigsel { margin: 13px 0 0 1px; text-align: left; white-space: nowrap; }
.smartbtn { width: 100px; height: 134px; margin-top: 6px; margin-bottom: -3px; border-radius: 8px; background: #c9dff8; align-items: center; flex: none; }
.smart { width: 62px; height: 66px; margin-top: 0; flex: none; }
.smartbtn span { margin-top: 6px; line-height: 32px; white-space: nowrap; }
.smartbtn .caret { margin: 9px 0 0; }

/* combos */
.combobar { height: 53px; padding-top: 5px; display: flex; gap: 8px; background: #f2f2f2; }
.combo { width: 196px; height: 43px; background: #fff; border: 2px solid #e6e6e6; border-top-width: 0; border-radius: 0 0 6px 6px; display: flex; align-items: center; justify-content: space-between; padding: 0 8px 0 7px; overflow: hidden; white-space: nowrap; }
.combo.first { width: 170px; border-left: 0; padding-left: 0; }
.combo .cut { margin-left: -18px; }
.combo .clip { width: 162px; overflow: hidden; }
.combo .caret { margin-left: 2px; border-top-color: #666; }

/* main body */
.body { height: 1109px; display: flex; position: relative; background: #f2f2f2; }
.titlebar { height: 23px; background: #e6e6e6; border-bottom: 2px solid #dcdcdc; position: relative; flex: none; }
.x { position: absolute; right: 8px; top: -3px; font-size: 19px; line-height: 26px; color: #a8a8a8; }
.thumb { position: absolute; background: #cfcfcf; border-radius: 8px; }
.handle { position: absolute; top: 455px; height: 200px; width: 8px; background: #5f666e; }
.hleft { left: 1027px; }
.hright { left: 1963px; }

/* left nav */
.leftpanel { width: 284px; background: #fff; border-right: 2px solid #d8d8d8; border-bottom: 3px solid #dcdcdc; display: flex; flex-direction: column; position: relative; overflow: hidden; flex: none; }
.navtitle { height: 44px; background: #f0f0f0; border-bottom: 2px solid #dedede; color: #777; line-height: 40px; padding-left: 0; overflow: hidden; flex: none; white-space: nowrap; }
.navtitle span { margin-left: -14px; }
.navtools { height: 55px; border-bottom: 2px solid #dedede; display: flex; align-items: center; gap: 8px; flex: none; position: relative; padding: 2px 0 0 29px; }
.plus { position: absolute; left: -7px; top: 5px; color: #1e78e6; font-size: 24px; }
.navbtn { width: 48px; height: 43px; background: #c5daf3; border-radius: 10px; display: flex; align-items: center; justify-content: center; }
.navbtn svg { width: 30px; height: 26px; }
.navlist { padding-top: 7px; flex: 1; overflow: hidden; }
.navlist li { height: 50px; margin-bottom: 6px; margin-top: 0; width: 253px; display: flex; align-items: center; white-space: nowrap; position: relative; top: 2px; letter-spacing: .3px; }
.navlist svg { width: 38px; height: 34px; margin: 0 28px 0 3px; flex: none; }
.navlist li.on { background: #cfe4fb; }
.navlist li.sec { background: #ededed; }
.navlist li.sec span { margin-left: -24px; }
.navthumb { left: 259px; top: 718px; width: 16px; height: 211px; }

/* middle column */
.midcol { width: 735px; margin-left: 8px; display: flex; flex-direction: column; flex: none; }
.panel { background: #fff; border: 0 solid #dcdcdc; border-width: 0 2px 0 2px; display: flex; flex-direction: column; position: relative; }
.complist { height: 324px; border-bottom: 2px solid #e2e2e2; }
.proplist { height: 774px; margin-top: 11px; border-bottom: 3px solid #dcdcdc; }
.proplist .titlebar { height: 21px; }
.ptabs { height: 46px; background: #f2f2f2; border-bottom: 2px solid #dcdcdc; display: flex; flex: none; gap: 2px; }
.proplist .ptabs { height: 47px; }
.ptab { width: 129px; background: #e0e0e0; color: #808080; text-align: center; line-height: 42px; border: solid #d0d0d0; border-width: 2px 2px 0 2px; font-weight: 500; margin-left: -1px; }
.ptab.active { background: #f2f2f2; color: #222; border-width: 2px 0 0 0; font-weight: 700; margin-left: -1px; }
.ptools { height: 55px; border-bottom: 3px solid #ececec; display: flex; align-items: center; padding: 3px 0 0 4px; position: relative; flex: none; white-space: nowrap; }
.pt { display: flex; align-items: center; gap: 10px; margin-right: 24px; }
.pt svg { width: 30px; height: 32px; flex: none; }
.pt .caret { margin-left: 7px; border-width: 5px; border-top-width: 6px; border-bottom: 0; border-top-color: #aaa; }
.pt.w-new { margin-right: 22px; }
.more { position: absolute; left: 708px; top: 8px; width: 20px; height: 38px; border: 2px solid #efefef; border-radius: 7px; font-size: 13px; line-height: 34px; letter-spacing: -3px; color: #555; white-space: nowrap; overflow: hidden; }
.psearch { height: 38px; border-bottom: 2px solid #e4e4e4; display: flex; align-items: center; justify-content: space-between; padding: 2px 15px 0 3px; color: #b4b4b4; flex: none; }
.psearch .mag { width: 22px; height: 22px; }
.clist { padding: 10px 0 0 80px; flex: 1; }
.clist li { width: fit-content; height: 42px; line-height: 41px; padding: 0 14px 0 5px; margin-bottom: 6px; white-space: nowrap; border-radius: 6px; letter-spacing: .5px; word-spacing: 6px; }
.clist li.on { background: #c3daf3; width: 338px; }
.listthumb { left: 712px; top: 248px; width: 14px; height: 29px; }

.ptable { flex: 1; background: linear-gradient(90deg, #f0f0f0 44px, #fff 44px); }
.prow { display: grid; grid-template-columns: 44px 200px 483px; height: 42px; background: #fff; }
.prow > span { display: flex; align-items: center; border-bottom: 2px solid #e1e1e1; border-right: 2px solid #e1e1e1; white-space: nowrap; }
.prow .n { background: #f0f0f0; justify-content: center; }
.prow .n.cur { background: #81b9f8; color: #fff; font-weight: 700; border-bottom: 2px solid #5fa2ee; }
.prow .k { padding-left: 5px; }
.prow .k.ctr { justify-content: center; padding: 0 6px 0 0; }
.prow .k.link { color: #2a5fe8; }
.prow .v { padding-left: 6px; }
.prow .v.gray { color: #8f8f8f; }
.prow .v.vh { background: #81b9f8; color: #fff; justify-content: center; border: 2px solid #6aaaf2; border-bottom-width: 3px; }
.prow .v.edit { border: 4px solid #6e6e6e; padding-left: 3px; }
.prow.head .n { background: #fff; }
.pm { width: 25px; height: 25px; border: 2px solid #a6a6a6; border-radius: 4px; display: inline-flex; align-items: center; justify-content: center; font-weight: 400; font-size: 20px; line-height: 1; margin: 0 12px 0 -1px; color: #666; flex: none; }

/* viewport */
.viewport { width: 928px; margin-left: 8px; margin-right: 9px; display: flex; flex-direction: column; position: relative; flex: none; }
.scene { display: block; width: 928px; height: 1056px; flex: none; }
.gl { stroke: #00e066; stroke-width: 4; fill: none; }
.gy { stroke: #7a7a7a; stroke-width: 2; fill: none; }
.hex path { fill: none; stroke: #007a00; stroke-width: 2; }
.lab { fill: #f2f2f2; font: 34px "Liberation Sans", sans-serif; }
.lab.big { font-size: 36px; }
.axz { fill: #0000e0; font: 30px "Liberation Sans", sans-serif; }
.axx { fill: #f00; font: 30px "Liberation Sans", sans-serif; }
.hint { height: 53px; background: #2a5239; color: #fff; display: flex; align-items: center; padding-left: 206px; gap: 8px; flex: none; }
.hint svg { width: 30px; height: 34px; flex: none; }
.viewbar { position: absolute; right: 1px; top: 0; width: 65px; height: 491px; background: #fff; border: 1px solid #d8d8d8; border-radius: 0 0 3px 3px; display: flex; flex-direction: column; align-items: center; padding-top: 27px; }
.v1 { width: 40px; height: 40px; flex: none; }
.viewbar .v1 { margin-bottom: 18px; }
.viewbar .caret { margin: -4px 0 15px; }
.vline { width: 46px; height: 2px; background: #7e7e7e; margin: 0 0 11px; flex: none; }
.two { fill: #1e78e6; font: 700 17px "Liberation Sans", sans-serif; }

/* right panel */
.rightpanel { flex: 1; min-width: 0; background: #fff; border-left: 2px solid #c8c8c8; border-bottom: 3px solid #c8c8c8; display: flex; flex-direction: column; overflow: hidden; }
.rightpanel .navtitle .rt { display: block; margin-left: 14px; width: 10px; overflow: hidden; }
.rtabs { height: 58px; flex: none; padding: 7px 0 0 5px; }
.rtab { display: block; width: 60px; height: 51px; border: 2px solid #ddd; border-bottom: 0; border-radius: 6px 6px 0 0; padding: 14px 0 0 14px; }
.rtab b { display: block; width: 6px; height: 20px; background: #1e78e6; }
.rtable { height: 906px; flex: none; margin-left: 4px; border: solid #dedede; border-width: 2px 0 2px 2px; }
.rrow { display: grid; grid-template-columns: 259px 126px 126px; height: 42px; position: relative; margin-left: 2px; }
.rrow > span { border-bottom: 2px solid #ddd; border-right: 2px solid #ddd; white-space: nowrap; display: flex; align-items: center; }
.rrow.head .ctr { justify-content: center; }
.rrow.head .hdr { justify-content: flex-end; padding-right: 14px; }
.rrow .c { justify-content: center; }
.rrow .nm { padding-left: 80px; position: relative; }
.rrow.t2 .nm::before, .rrow.t1 .nm::before { content: ""; position: absolute; left: 35px; top: 0; bottom: -2px; width: 2px; background: #ddd; }
.rrow.t2 .nm::after, .rrow.t1 .nm::after { content: ""; position: absolute; left: 35px; top: 50%; width: 33px; height: 2px; background: #e2e2e2; }
.rrow.last .nm::before { bottom: 50%; }
.rrow.t2::before, .group-row::before { content: ""; position: absolute; left: 15px; top: 0; bottom: 0; width: 2px; background: #ddd; z-index: 1; }
.group-row::before { bottom: 50%; }
.rrow.group-row .nm { padding-left: 22px; }
.pm.minus { margin: 0 15px 0 0; }
.cb { width: 28px; height: 27px; border: 2px solid #8a8a8a; border-radius: 3px; display: block; position: relative; background: #fff; }
.cb.part::after { content: ""; position: absolute; inset: 1px; background: #9cc6fb; border: 2px solid #3f93f2; }
.cb.on { background: #2a7de1; border-color: #2a7de1; }
.cb.on::after { content: ""; position: absolute; left: 6px; top: 4px; width: 14px; height: 8px; border: solid #fff; border-width: 0 0 3px 3px; transform: rotate(-45deg); }
.cb.dis { background: #ececec; border-color: #bbb; }
.rfoot { flex: 1; padding: 13px 0 0 358px; }
.rbtn { width: 180px; height: 51px; border: 2px solid #ddd; border-radius: 7px; text-align: left; padding-left: 16px; white-space: nowrap; }

/* status */
.statusbar { height: 50px; background: #fafafa; display: flex; overflow: hidden; }
.stats { width: 873px; flex: none; display: flex; align-items: center; white-space: nowrap; padding-top: 12px; }
.s1 { margin-left: -26px; width: 72px; } .s2 { margin-left: 9px; width: 44px; }
.s3 { margin-left: 54px; width: 72px; } .s4 { margin-left: 8px; width: 120px; }
.s5 { margin-left: 80px; width: 120px; } .s6 { margin-left: 2px; width: 70px; }
.s7 { margin-left: 30px; width: 120px; } .s8 { margin-left: 3px; }
.sbtns { display: flex; gap: 8px; padding-top: 8px; flex: none; }
.sb { height: 50px; background: #fdfdfd; border: 2px solid #c6c6c6; border-radius: 7px 7px 0 0; display: flex; align-items: flex-start; padding-top: 5px; justify-content: center; gap: 0; position: relative; flex: none; }
.sb svg { width: 40px; height: 34px; flex: none; }
.sb .sv { width: 44px; }
.sb .caret { margin-top: 13px; }
.w48 { width: 48px; } .w50 { width: 50px; } .w70 { width: 70px; }
.m14 { margin-left: 6px; } .m13 { margin-left: 5px; }
.sb.on { background: #d5e6fb; border-color: #1e78e6; }

/* dropdown */
.dropmenu { position: absolute; left: 1996px; top: 187px; width: 308px; height: 558px; background: #fff; border: 2px solid #b9b9b9; border-radius: 2px; padding: 1px 3px 0; z-index: 5; }
.mi { height: 46px; display: flex; align-items: center; padding-left: 5px; white-space: nowrap; }
.mi svg { width: 31px; height: 31px; margin-right: 15px; flex: none; }
.mi.off { color: #b6b6b6; }
.mi.hover { background: #d6e8fd; height: 42px; margin: 2px 0; }

/* hand-drawn marks on top of the shot */
.annot { position: absolute; left: 0; top: 0; width: 2435px; height: 1445px; z-index: 9; pointer-events: none; }
.annot path { fill: none; stroke: #ff2012; stroke-width: 8; stroke-linejoin: round; stroke-linecap: round; }
```
